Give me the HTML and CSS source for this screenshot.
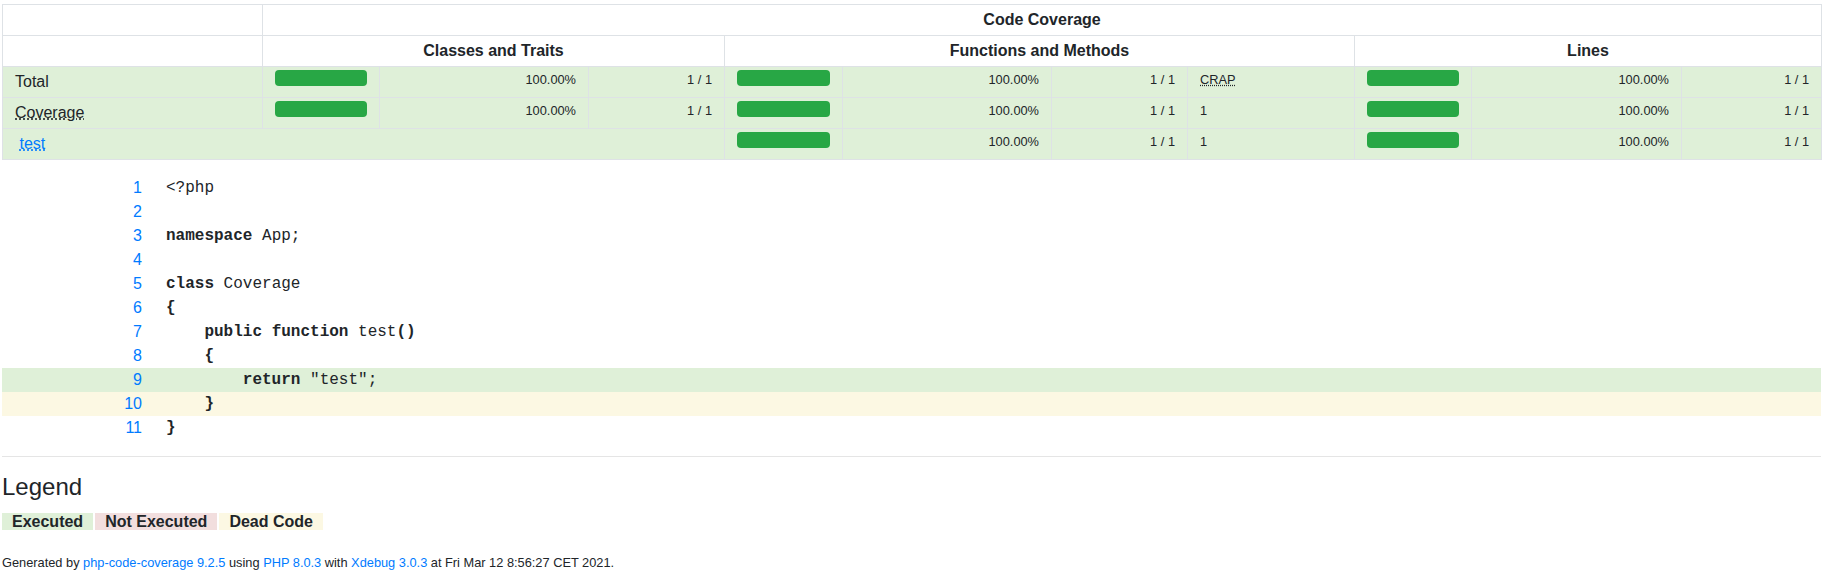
FILE: index.html
```html
<!DOCTYPE html>
<html lang="en">
<head>
<meta charset="UTF-8">
<title>Code Coverage for Coverage.php</title>
<link rel="stylesheet" href="styles.css">
</head>
<body>
<div class="page">
  <table class="cov">
    <colgroup>
      <col class="c-name"><col class="c-bar"><col class="c-pct"><col class="c-num">
      <col class="c-bar2"><col class="c-pct"><col class="c-num"><col class="c-crap">
      <col class="c-bar"><col class="c-pct3"><col class="c-num3">
    </colgroup>
    <thead>
      <tr><td>&nbsp;</td><td colspan="10" class="hd">Code Coverage</td></tr>
      <tr><td>&nbsp;</td><td colspan="3" class="hd">Classes and Traits</td><td colspan="4" class="hd">Functions and Methods</td><td colspan="3" class="hd">Lines</td></tr>
    </thead>
    <tbody>
      <tr class="ok">
        <td>Total</td>
        <td class="big"><div class="progress"><div class="progress-bar" style="width: 100%"></div></div></td>
        <td class="small r">100.00%</td>
        <td class="small r">1 / 1</td>
        <td class="big"><div class="progress"><div class="progress-bar" style="width: 100%"></div></div></td>
        <td class="small r">100.00%</td>
        <td class="small r">1 / 1</td>
        <td class="small"><abbr title="Change Risk Anti-Patterns (CRAP) Index">CRAP</abbr></td>
        <td class="big"><div class="progress"><div class="progress-bar" style="width: 100%"></div></div></td>
        <td class="small r">100.00%</td>
        <td class="small r">1 / 1</td>
      </tr>
      <tr class="ok">
        <td><abbr title="App\Coverage">Coverage</abbr></td>
        <td class="big"><div class="progress"><div class="progress-bar" style="width: 100%"></div></div></td>
        <td class="small r">100.00%</td>
        <td class="small r">1 / 1</td>
        <td class="big"><div class="progress"><div class="progress-bar" style="width: 100%"></div></div></td>
        <td class="small r">100.00%</td>
        <td class="small r">1 / 1</td>
        <td class="small">1</td>
        <td class="big"><div class="progress"><div class="progress-bar" style="width: 100%"></div></div></td>
        <td class="small r">100.00%</td>
        <td class="small r">1 / 1</td>
      </tr>
      <tr class="ok">
        <td colspan="4">&nbsp;<a href="#7"><abbr title="test()">test</abbr></a></td>
        <td class="big"><div class="progress"><div class="progress-bar" style="width: 100%"></div></div></td>
        <td class="small r">100.00%</td>
        <td class="small r">1 / 1</td>
        <td class="small">1</td>
        <td class="big"><div class="progress"><div class="progress-bar" style="width: 100%"></div></div></td>
        <td class="small r">100.00%</td>
        <td class="small r">1 / 1</td>
      </tr>
    </tbody>
  </table>

  <table class="code">
    <colgroup><col class="c-ln"><col></colgroup>
    <tbody>
      <tr><td class="ln"><a href="#1">1</a></td><td class="line">&lt;?php</td></tr>
      <tr><td class="ln"><a href="#2">2</a></td><td class="line"></td></tr>
      <tr><td class="ln"><a href="#3">3</a></td><td class="line"><span class="kw">namespace</span> App;</td></tr>
      <tr><td class="ln"><a href="#4">4</a></td><td class="line"></td></tr>
      <tr><td class="ln"><a href="#5">5</a></td><td class="line"><span class="kw">class</span> Coverage</td></tr>
      <tr><td class="ln"><a href="#6">6</a></td><td class="line"><span class="kw">{</span></td></tr>
      <tr><td class="ln"><a href="#7">7</a></td><td class="line">    <span class="kw">public</span> <span class="kw">function</span> test<span class="kw">()</span></td></tr>
      <tr><td class="ln"><a href="#8">8</a></td><td class="line">    <span class="kw">{</span></td></tr>
      <tr class="executed"><td class="ln"><a href="#9">9</a></td><td class="line">        <span class="kw">return</span> "test";</td></tr>
      <tr class="dead"><td class="ln"><a href="#10">10</a></td><td class="line">    <span class="kw">}</span></td></tr>
      <tr><td class="ln"><a href="#11">11</a></td><td class="line"><span class="kw">}</span></td></tr>
    </tbody>
  </table>

  <footer class="foot">
    <hr class="rule">
    <h4 class="legend-title">Legend</h4>
    <p class="legend"><span class="lg success"><strong>Executed</strong></span><span class="lg danger"><strong>Not Executed</strong></span><span class="lg warning"><strong>Dead Code</strong></span></p>
    <p class="gen"><small>Generated by <a href="https://github.com/sebastianbergmann/php-code-coverage">php-code-coverage 9.2.5</a> using <a href="https://secure.php.net/">PHP 8.0.3</a> with <a href="https://xdebug.org/">Xdebug 3.0.3</a> at Fri Mar 12 8:56:27 CET 2021.</small></p>
  </footer>
</div>
</body>
</html>
```

FILE: styles.css
```css
html, body {
  margin: 0;
  padding: 0;
  background: #fff;
}

body {
  font-family: "Liberation Sans", Arial, sans-serif;
  font-size: 16px;
  line-height: 1.5;
  color: #212529;
}

a {
  color: #007bff;
  text-decoration: none;
}

abbr {
  text-decoration: underline dotted;
  cursor: help;
}

.page {
  margin: 4px 0 0 2px;
  width: 1819px;
}

/* coverage summary table */
.cov {
  width: 1819px;
  table-layout: fixed;
  border-collapse: collapse;
  margin-bottom: 16px;
}

.c-name { width: 260px; }
.c-bar { width: 117px; }
.c-bar2 { width: 118px; }
.c-pct { width: 209px; }
.c-pct3 { width: 210px; }
.c-num { width: 136px; }
.c-num3 { width: 140px; }
.c-crap { width: 167px; }

.cov td {
  border: 1px solid #dee2e6;
  padding: 3px 12px;
  vertical-align: top;
  line-height: 24px;
  white-space: nowrap;
}

.cov td.hd {
  text-align: center;
  font-weight: bold;
}

.cov tr.ok td {
  background: #dff0d8;
}

.cov td.small {
  font-size: 12.8px;
  line-height: 19.2px;
}

.cov td.r {
  text-align: right;
}

.progress {
  height: 16px;
  border-radius: 4px;
  background: #e9ecef;
  overflow: hidden;
  display: flex;
}

.progress-bar {
  background: #28a745;
  height: 100%;
}

/* source listing */
.code {
  width: 1819px;
  table-layout: fixed;
  border-collapse: collapse;
  margin: 0;
}

.c-ln { width: 152px; }

.code td {
  padding: 0;
  line-height: 24px;
  height: 24px;
  vertical-align: top;
}

.code td.ln {
  text-align: right;
  padding-right: 12px;
}

.code td.line {
  padding-left: 12px;
  white-space: pre;
  font-family: "Liberation Mono", "Courier New", monospace;
  font-size: 16px;
  color: #212529;
}

.kw {
  font-weight: bold;
}

.code tr.executed td {
  background: #dff0d8;
}

.code tr.dead td {
  background: #fcf8e3;
}

/* footer */
.rule {
  margin: 16px 0;
  border: 0;
  border-top: 1px solid rgba(0, 0, 0, 0.1);
  height: 0;
}

.legend-title {
  margin: 0 0 8px;
  font-size: 24px;
  font-weight: 500;
  line-height: 1.2;
}

.legend {
  margin: 0 0 16px;
}

.lg {
  margin-right: 2px;
  padding: 0 10px;
}

.success { background: #dff0d8; }
.danger { background: #f2dede; }
.warning { background: #fcf8e3; }

.gen {
  margin: 0 0 16px;
}

.gen small {
  font-size: 12.8px;
}
```
